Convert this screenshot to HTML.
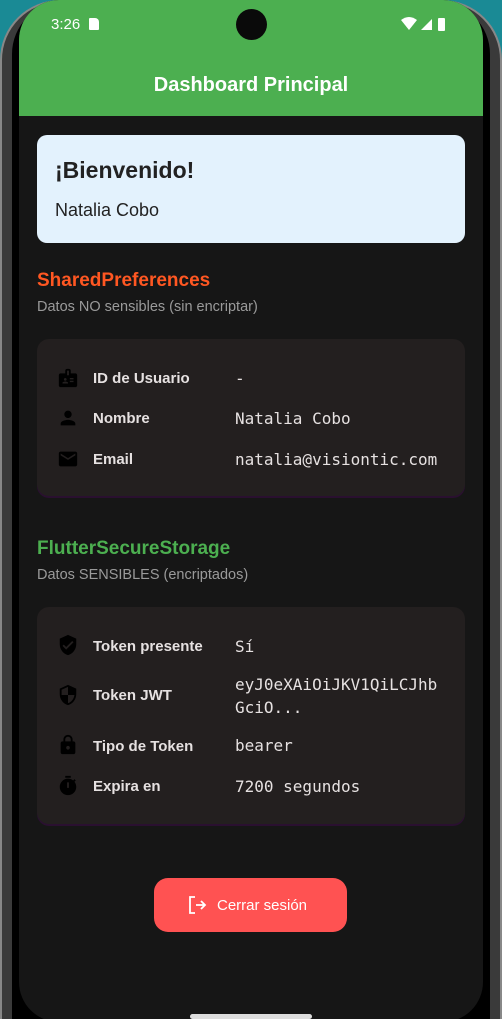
<!DOCTYPE html><html><head><meta charset="utf-8"><style>
*{margin:0;padding:0;box-sizing:border-box}
html{width:502px;height:1019px;overflow:hidden}
body{width:502px;height:1019px;background:#1a8a95;position:relative;overflow:hidden;font-family:"Liberation Sans",sans-serif}
.frame{position:absolute;left:0;top:0;width:502px;height:1019px;border-radius:60px 60px 0 0;background:#3a3a3a;border:2px solid #888;border-bottom:none}
.inner{position:absolute;left:10px;top:0;right:10px;bottom:0;border-radius:52px 52px 0 0;background:#000}
.screen{position:absolute;left:19px;top:0;width:464px;height:1022px;border-radius:40px;background:#161616;overflow:hidden}
.bar{position:absolute;left:0;top:0;width:100%;height:116px;background:#4caf50;color:#fff}
.abs{position:absolute}
.card{position:absolute;left:18px;width:428px;background:#231f1f;border-radius:12px;box-shadow:0 2px 0 #2a1030}
.lbl{position:absolute;left:56px;color:#e6e1e1;font-weight:bold;font-size:15px}
.val{position:absolute;left:198px;color:#e6e1e1;font-family:"DejaVu Sans Mono","Liberation Mono",monospace;font-size:16px;line-height:23px}
.ic{position:absolute;left:20px}
</style></head><body>
<div class="frame"><div class="inner"></div></div>
<div class="screen">
 <div class="bar">
  <div class="abs" style="left:32px;top:16px;font-size:15px">3:26</div>
  <div class="abs" style="left:70px;top:18px;width:10px;height:12px;background:#fff;border-radius:1px 4px 1px 1px"></div>
  <div class="abs" style="left:217px;top:9px;width:31px;height:31px;border-radius:50%;background:#0a0a0a"></div>
  <svg class="abs" style="left:382px;top:17px" width="46" height="15"><path d="M0 3Q8-3 16 3L8 13Z" fill="#fff"/><path d="M20 13L31 2V13Z" fill="#fff"/><rect x="37" y="1" width="7" height="13" rx="1" fill="#fff"/></svg>
  <div class="abs" style="left:0;width:100%;top:74px;text-align:center;font-size:20px;font-weight:bold">Dashboard Principal</div>
 </div>
 <div class="abs" style="left:18px;top:135px;width:428px;height:108px;background:#e3f2fd;border-radius:10px;color:#222">
  <div class="abs" style="left:18px;top:22px;font-size:23px;font-weight:bold">¡Bienvenido!</div>
  <div class="abs" style="left:18px;top:65px;font-size:18px">Natalia Cobo</div>
 </div>
 <div class="abs" style="left:18px;top:270px;color:#ff5722;font-size:19px;font-weight:bold">SharedPreferences</div>
 <div class="abs" style="left:18px;top:299px;color:#9a9a9a;font-size:14.5px">Datos NO sensibles (sin encriptar)</div>
 <div class="card" style="top:339px;height:157px">
  <svg class="ic" style="top:28px" width="22" height="22" viewBox="0 0 24 24"><path d="M20 7h-5V4c0-1.1-.9-2-2-2h-2c-1.1 0-2 .9-2 2v3H4c-1.1 0-2 .9-2 2v11c0 1.1.9 2 2 2h16c1.1 0 2-.9 2-2V9c0-1.1-.9-2-2-2zM9 12c.83 0 1.5.67 1.5 1.5S9.830 15 9 15s-1.5-.67-1.5-1.5S8.17 12 9 12zm3 6H6v-.75c0-1 2-1.5 3-1.5s3 .5 3 1.5V18zm1-9h-2V4h2v5zm5 7.5h-4V15h4v1.5zm0-3h-4V12h4v1.5z" fill="#000"/></svg>
  <div class="lbl" style="top:31px">ID de Usuario</div><div class="val" style="top:28px">-</div>
  <svg class="ic" style="top:68px" width="22" height="22" viewBox="0 0 24 24"><path d="M12 12c2.2 0 4-1.8 4-4s-1.8-4-4-4-4 1.8-4 4 1.8 4 4 4zm0 2c-2.7 0-8 1.3-8 4v2h16v-2c0-2.7-5.3-4-8-4z" fill="#000"/></svg>
  <div class="lbl" style="top:71px">Nombre</div><div class="val" style="top:68px">Natalia Cobo</div>
  <svg class="ic" style="top:109px" width="22" height="22" viewBox="0 0 24 24"><path d="M20 4H4c-1.1 0-2 .9-2 2v12c0 1.1.9 2 2 2h16c1.1 0 2-.9 2-2V6c0-1.1-.9-2-2-2zm0 4l-8 5-8-5V6l8 5 8-5v2z" fill="#000"/></svg>
  <div class="lbl" style="top:112px">Email</div><div class="val" style="top:109px">natalia@visiontic.com</div>
 </div>
 <div class="abs" style="left:18px;top:538px;color:#4caf50;font-size:19px;font-weight:bold">FlutterSecureStorage</div>
 <div class="abs" style="left:18px;top:567px;color:#9a9a9a;font-size:14.5px">Datos SENSIBLES (encriptados)</div>
 <div class="card" style="top:607px;height:217px">
  <svg class="ic" style="top:27px" width="22" height="22" viewBox="0 0 24 24"><path d="M12 1L3 5v6c0 5.55 3.84 10.74 9 12 5.160-1.26 9-6.45 9-12V5l-9-4zm-2 16l-4-4 1.41-1.410L10 14.17l6.59-6.59L18 9l-8 8z" fill="#000"/></svg>
  <div class="lbl" style="top:31px">Token presente</div><div class="val" style="top:28px">Sí</div>
  <svg class="ic" style="top:77px" width="22" height="22" viewBox="0 0 24 24"><path d="M12 1L3 5v6c0 5.55 3.84 10.74 9 12 5.16-1.26 9-6.45 9-12V5l-9-4zm0 10.99h7c-.53 4.12-3.28 7.79-7 8.94V12H5V6.3l7-3.11v8.8z" fill="#000"/></svg>
  <div class="lbl" style="top:80px">Token JWT</div><div class="val" style="top:66px">eyJ0eXAiOiJKV1QiLCJhb<br>GciO...</div>
  <svg class="ic" style="top:127px" width="22" height="22" viewBox="0 0 24 24"><path d="M18 8h-1V6c0-2.76-2.24-5-5-5S7 3.24 7 6v2H6c-1.1 0-2 .9-2 2v10c0 1.1.9 2 2 2h12c1.1 0 2-.9 2-2V10c0-1.1-.9-2-2-2zm-6 9c-1.1 0-2-.9-2-2s.9-2 2-2 2 .9 2 2-.9 2-2 2zM9 8V6c0-1.66 1.34-3 3-3s3 1.34 3 3v2H9z" fill="#000"/></svg>
  <div class="lbl" style="top:131px">Tipo de Token</div><div class="val" style="top:127px">bearer</div>
  <svg class="ic" style="top:168px" width="22" height="22" viewBox="0 0 24 24"><path d="M15 1H9v2h6V1zm4.03 6.39l1.42-1.42-1.41-1.41-1.43 1.42A9 9 0 0 0 12 4a9 9 0 1 0 9 9c0-2.12-.74-4.07-1.97-5.61zM13 14h-2V8h2v6z" fill="#000"/></svg>
  <div class="lbl" style="top:171px">Expira en</div><div class="val" style="top:168px">7200 segundos</div>
 </div>
 <div class="abs" style="left:135px;top:878px;width:193px;height:54px;background:#ff5252;border-radius:14px;color:#fff">
  <svg class="abs" style="left:34px;top:18px" width="20" height="18" viewBox="0 0 20 18"><path d="M7 1H2v16h5M8 9h9M13 5l4 4-4 4" fill="none" stroke="#fff" stroke-width="1.8"/></svg>
  <div class="abs" style="left:63px;top:19px;font-size:15px">Cerrar sesión</div>
 </div>
</div>
<div class="abs" style="left:190px;top:1014px;width:122px;height:5px;border-radius:3px;background:#ddd"></div>
</body></html>
